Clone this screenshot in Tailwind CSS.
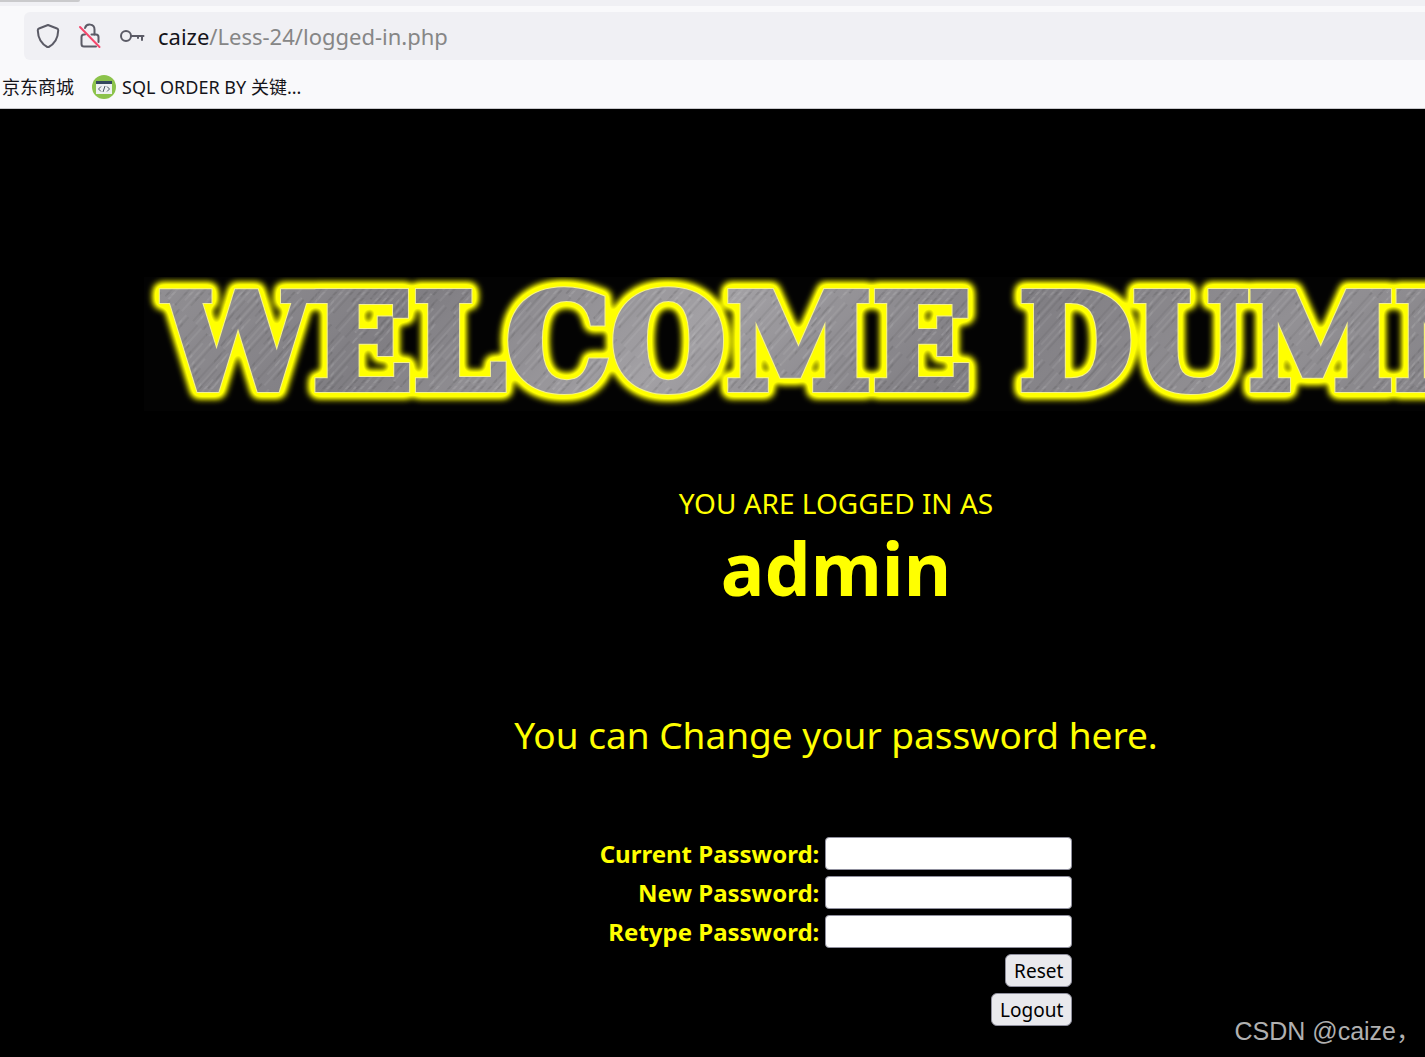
<!DOCTYPE html>
<html lang="en">
<head>
    <meta charset="UTF-8">
    <meta name="viewport" content="width=device-width, initial-scale=1.0">
    <title>logged-in.php</title>
    <script src="https://cdn.jsdelivr.net/npm/@tailwindcss/browser@4"></script>
</head>
<body class="relative flex min-h-screen flex-col overflow-x-hidden bg-black font-['Noto_Sans','Noto_Sans_CJK_SC',sans-serif]">
    <!-- Browser toolbar -->
    <header class="border-b border-[#c8c8cc] bg-[#f9f9fb]">
        <div class="h-1.5 bg-[#f0f0f4]">
            <div class="h-0.5 w-20 rounded-br bg-[#cacacc]"></div>
        </div>
        <div class="mt-1.5 ml-6 flex h-12 items-center rounded-l-md bg-[#f0f0f4] pl-3">
            <svg class="h-6 w-6" viewBox="0 0 24 24" fill="none" stroke="#5b5b66" stroke-width="2" stroke-linejoin="round">
                <path d="M12 1 L21 4.500 Q22.300 5 22.200 6.500 C22 14.500 18.500 20 12 23.500 C5.500 20 2 14.500 1.800 6.500 Q1.700 5 3 4.500 Z"/>
            </svg>
            <svg class="ml-4 h-7 w-7" viewBox="0 0 28 28" fill="none" stroke="#5b5b66" stroke-width="2" stroke-linecap="round" stroke-linejoin="round">
                <path d="M9 6 C10.500 1 18.500 1.500 18.500 7.500 V12.500"/>
                <path d="M15.500 12.500 H20 a2.500 2.500 0 0 1 2.500 2.500 V20"/>
                <path d="M9 12.500 H8 a2.500 2.500 0 0 0 -2.500 2.500 V22 a2.500 2.500 0 0 0 2.500 2.500 H20"/>
                <path d="M4 5 L23.500 25" stroke="#f5476c"/>
            </svg>
            <svg class="ml-4 h-6 w-7" viewBox="0 0 28 24" fill="none" stroke="#5b5b66" stroke-width="2">
                <circle cx="6" cy="12" r="5"/>
                <path d="M11 12 H23.500 M22 12 V16 M18 12 V14" stroke-linecap="round"/>
            </svg>
            <div class="ml-2.5 text-[22px] leading-8 text-[#868686]"><span class="text-[#15141a]">caize</span>/Less-24/logged-in.php</div>
        </div>
        <nav class="flex h-12 items-center pt-1.5 text-[18px] leading-6 text-[#15141a]">
            <a href="#" class="pl-0.5">京东商城</a>
            <a href="#" class="ml-4.5 flex items-center gap-1.5">
                <svg class="h-6 w-6" viewBox="0 0 24 24">
                    <circle cx="12" cy="12" r="12" fill="#8cc34b"/>
                    <rect x="4" y="6" width="16" height="13" fill="#eef1f3"/>
                    <rect x="4" y="6" width="16" height="3" fill="#34495e"/>
                    <path d="M9 11.500 L6.500 14 L9 16.500 M15 11.500 L17.500 14 L15 16.500 M13 11 L11 17" fill="none" stroke="#4a5763"/>
                </svg>
                <span>SQL ORDER BY 关键...</span>
            </a>
        </nav>
    </header>

    <main class="flex flex-col items-center overflow-hidden pt-42 pl-[247px] text-[#ffff00]">
        <!-- Metal banner with a yellow glow -->
        <svg class="h-[134px] w-[1384px] shrink-0 bg-[#030303]" viewBox="0 0 1384 134" role="img" aria-label="Welcome Dummy">
            <defs>
                <linearGradient id="shade" x1="0" y1="0" x2="300" y2="300" gradientUnits="userSpaceOnUse" spreadMethod="reflect">
                    <stop offset="0" stop-color="#929094"/>
                    <stop offset="0.500" stop-color="#807e83"/>
                    <stop offset="1" stop-color="#a3a1a5"/>
                </linearGradient>
                <pattern id="brushed" width="37" height="90" patternUnits="userSpaceOnUse" patternTransform="rotate(42)">
                    <path d="M3 0 V50 M9 30 V80 M14 10 V90 M20 0 V40 M26 20 V70 M33 50 V90" stroke="#ddd" stroke-opacity="0.180"/>
                    <path d="M5 20 V90 M11 0 V40 M17 40 V80 M23 0 V60 M29 30 V90 M35 0 V45" stroke="#222" stroke-opacity="0.150"/>
                </pattern>
                <filter id="glow" x="-20" y="-20" width="1424" height="180" filterUnits="userSpaceOnUse">
                    <feGaussianBlur stdDeviation="3"/>
                    <feComponentTransfer>
                        <feFuncA type="linear" slope="1.300"/>
                    </feComponentTransfer>
                </filter>
                <text id="welcome" x="20" y="112" font-family="DejaVu Serif" font-weight="bold" font-size="132">WELCOME DUMMY</text>
            </defs>
            <use href="#welcome" fill="#ff0" stroke="#ff0" stroke-width="20" stroke-linejoin="round" filter="url(#glow)"/>
            <use href="#welcome" fill="#f4f08c" stroke="#f4f08c" stroke-width="8"/>
            <use href="#welcome" fill="url(#shade)" stroke="url(#shade)" stroke-width="6"/>
            <use href="#welcome" fill="url(#brushed)" stroke="url(#brushed)" stroke-width="6"/>
        </svg>

        <p class="mt-18 text-[28px] leading-10">YOU ARE LOGGED IN AS</p>
        <h1 class="text-[73px] leading-[90px] font-bold">admin</h1>
        <p class="mt-[94px] text-[37px] leading-14">You can Change your password here.</p>

        <form class="mt-17">
            <table class="border-separate border-spacing-1.5 text-[24px] leading-8 font-bold">
                <tbody>
                    <tr>
                        <td class="h-[33px] p-0 text-right"><label for="current">Current Password:</label></td>
                        <td class="p-0"><input type="password" id="current" class="block h-[33px] w-[247px] rounded-sm border border-[#8f8f9d] bg-white px-1 text-black"></td>
                    </tr>
                    <tr>
                        <td class="h-[33px] p-0 text-right"><label for="new">New Password:</label></td>
                        <td class="p-0"><input type="password" id="new" class="block h-[33px] w-[247px] rounded-sm border border-[#8f8f9d] bg-white px-1 text-black"></td>
                    </tr>
                    <tr>
                        <td class="h-[33px] p-0 text-right"><label for="retype">Retype Password:</label></td>
                        <td class="p-0"><input type="password" id="retype" class="block h-[33px] w-[247px] rounded-sm border border-[#8f8f9d] bg-white px-1 text-black"></td>
                    </tr>
                    <tr>
                        <td colspan="2" class="p-0"><button type="reset" class="ml-auto block h-[33px] rounded-md border border-[#8f8f9d] bg-[#e9e9ed] px-2 text-[19px] leading-7 font-normal text-black">Reset</button></td>
                    </tr>
                    <tr>
                        <td colspan="2" class="p-0"><button type="button" class="ml-auto block h-[33px] rounded-md border border-[#8f8f9d] bg-[#e9e9ed] px-2 text-[19px] leading-7 font-normal text-black">Logout</button></td>
                    </tr>
                </tbody>
            </table>
        </form>
    </main>

    <div class="absolute right-1 bottom-2 font-['Liberation_Sans','Noto_Sans_CJK_SC',sans-serif] text-[25px] leading-9 text-[#b0b0b0]">CSDN @caize，</div>
</body>
</html>
